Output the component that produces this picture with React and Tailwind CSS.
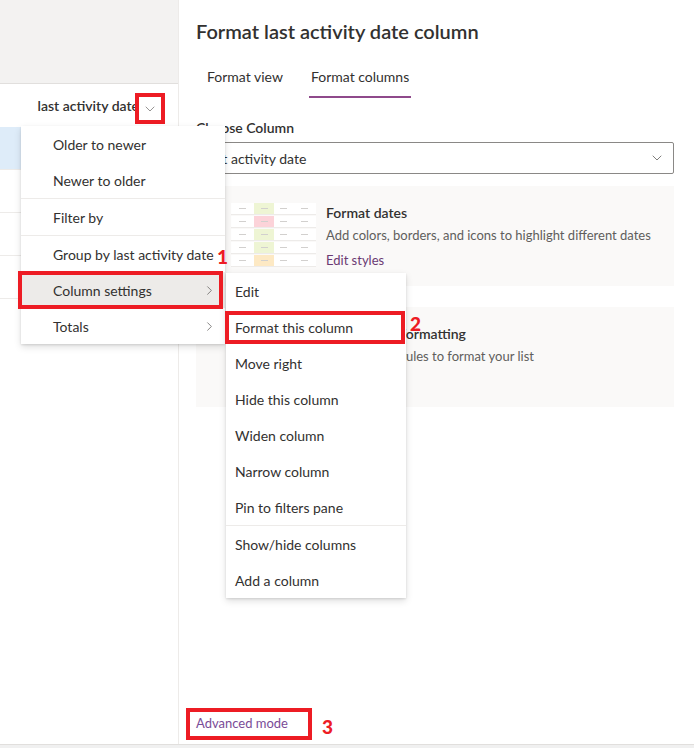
import { ChevronDown, ChevronRight } from "lucide-react";

const font = { fontFamily: '"Segoe UI", Lato, "Noto Sans", sans-serif' };

const cellColors = ["bg-[#eef5d4]", "bg-[#fcd3d9]", "bg-[#eef5d4]", "bg-[#eef5d4]", "bg-[#fde9c4]"];

function Thumb() {
  return (
    <div className="flex flex-col gap-px w-[85px] shrink-0">
      {cellColors.map((c, i) => (
        <div key={i} className="flex h-[12px] border-b border-[#edebe9]">
          <div className="w-[23px] flex items-center justify-center bg-white">
            <span className="w-[7px] h-px bg-[#d2d0ce]" />
          </div>
          <div className={`w-[20px] flex items-center justify-center ${c}`}>
            <span className="w-[7px] h-px bg-[#d2d0ce]" />
          </div>
          <div className="w-[19px] flex items-center justify-center bg-white">
            <span className="w-[7px] h-px bg-[#d2d0ce]" />
          </div>
          <div className="w-[23px] flex items-center justify-center bg-white">
            <span className="w-[7px] h-px bg-[#d2d0ce]" />
          </div>
        </div>
      ))}
    </div>
  );
}

function MenuItem({ label, sub, active, pl = "pl-[32px]" }) {
  return (
    <div
      className={`h-[36px] flex items-center justify-between ${pl} pr-[8px] text-[14px] text-[#323130] ${
        active ? "bg-[#edebe9]" : ""
      }`}
    >
      <span>{label}</span>
      {sub && <ChevronRight size={15} strokeWidth={1.2} className="text-[#605e5c]" />}
    </div>
  );
}

const Divider = () => <div className="h-px bg-[#edebe9]" />;

export default function App() {
  return (
    <div className="relative w-[694px] h-[748px] overflow-hidden bg-white flex flex-col" style={font}>
      <div className="flex flex-1">
        {/* list side */}
        <div className="w-[179px] border-r border-[#edebe9] flex flex-col">
          <div className="h-[84px] bg-[#f3f2f1] border-b border-[#e1dfdd]" />
          <div className="h-[43px] flex items-center justify-end pr-[39px]">
            <span className="text-[14px] font-semibold text-[#323130]">last activity date</span>
          </div>
          <div className="h-[43px] bg-[#deecf9] border-b border-[#edebe9]" />
          <div className="h-[43px] border-b border-[#edebe9]" />
          <div className="h-[43px] border-b border-[#edebe9]" />
          <div className="h-[43px] border-b border-[#edebe9]" />
        </div>

        {/* format panel */}
        <div className="flex-1 flex flex-col pl-[17px] pr-[20px] pt-[17px] pb-[12px]">
          <h1 className="text-[20px] font-semibold text-[#323130] leading-[28px]">
            Format last activity date column
          </h1>
          <div className="flex mt-[17px] text-[14px] text-[#323130]">
            <div className="ml-[11px] h-[44px] flex items-start pt-[4px]">Format view</div>
            <div className="ml-[26px] h-[44px] flex flex-col items-center pt-[4px]">
              <span className="px-[2px]">Format columns</span>
              <span className="mt-[9px] h-[2px] w-full bg-[#8f4a8b]" />
            </div>
          </div>
          <div className="mt-[12px] text-[14px] font-semibold text-[#323130] leading-[20px]">Choose Column</div>
          <div className="mt-[4px] h-[32px] border border-[#8a8886] rounded-[2px] flex items-center justify-between pl-[9px] pr-[8px] text-[14px] text-[#323130]">
            <span>last activity date</span>
            <ChevronDown size={16} strokeWidth={1.2} className="text-[#605e5c]" />
          </div>

          <div className="mt-[12px] h-[100px] bg-[#faf9f8] flex pl-[35px] pt-[17px]">
            <Thumb />
            <div className="ml-[10px] flex flex-col">
              <span className="text-[14px] font-semibold text-[#323130] leading-[20px]">Format dates</span>
              <span className="text-[13px] text-[#605e5c] leading-[18px] mt-[3px]">
                Add colors, borders, and icons to highlight different dates
              </span>
              <span className="text-[13px] text-[#6b3a73] leading-[18px] mt-[7px]">Edit styles</span>
            </div>
          </div>

          <div className="mt-[21px] h-[100px] bg-[#faf9f8] flex pl-[130px] pt-[17px]">
            <div className="flex flex-col">
              <span className="text-[14px] font-semibold text-[#323130] leading-[20px]">
                Conditional formatting
              </span>
              <span className="text-[13px] text-[#605e5c] leading-[18px] mt-[3px]">
                Show or edit rules to format your list
              </span>
              <span className="text-[13px] text-[#6b3a73] leading-[18px] mt-[7px]">Manage rules</span>
            </div>
          </div>

          <div className="flex-1" />
          <div className="text-[13px] text-[#7a4c97] leading-[18px]">Advanced mode</div>
        </div>
      </div>
      <div className="h-[4px] bg-[#f0f0f0] border-t border-[#e1dfdd]" />

      {/* header chevron annotation */}
      <div className="absolute left-[135px] top-[93px] w-[30px] h-[31px] border-[4px] border-[#ed1c24] bg-white flex items-center justify-center">
        <ChevronDown size={16} strokeWidth={1} className="text-[#605e5c]" />
      </div>

      {/* column menu */}
      <div className="absolute left-[21px] top-[126px] w-[204px] bg-white shadow-[0_3px_7px_rgba(0,0,0,0.13),0_1px_2px_rgba(0,0,0,0.11)]">
        <MenuItem label="Older to newer" />
        <MenuItem label="Newer to older" />
        <Divider />
        <MenuItem label="Filter by" />
        <Divider />
        <MenuItem label="Group by last activity date" />
        <MenuItem label="Column settings" sub active />
        <MenuItem label="Totals" sub />
      </div>

      {/* column settings submenu */}
      <div className="absolute left-[226px] top-[273px] w-[180px] bg-white shadow-[0_3px_7px_rgba(0,0,0,0.13),0_1px_2px_rgba(0,0,0,0.11)]">
        {["Edit", "Format this column", "Move right", "Hide this column", "Widen column", "Narrow column", "Pin to filters pane"].map(
          (l) => (
            <MenuItem key={l} label={l} pl="pl-[9px]" />
          )
        )}
        <Divider />
        <MenuItem label="Show/hide columns" pl="pl-[9px]" />
        <MenuItem label="Add a column" pl="pl-[9px]" />
      </div>

      {/* step annotations */}
      <div className="absolute left-[18px] top-[271px] w-[205px] h-[38px] border-[4px] border-[#ed1c24]" />
      <span className="absolute left-[217px] top-[245px] text-[19px] font-black text-[#ed1c24] leading-[24px]">1</span>

      <div className="absolute left-[225px] top-[311px] w-[180px] h-[33px] border-[4px] border-[#ed1c24]" />
      <span className="absolute left-[410px] top-[312px] text-[19px] font-black text-[#ed1c24] leading-[24px]">2</span>

      <div className="absolute left-[186px] top-[708px] w-[126px] h-[32px] border-[4px] border-[#ed1c24]" />
      <span className="absolute left-[322px] top-[715px] text-[19px] font-black text-[#ed1c24] leading-[24px]">3</span>
    </div>
  );
}
